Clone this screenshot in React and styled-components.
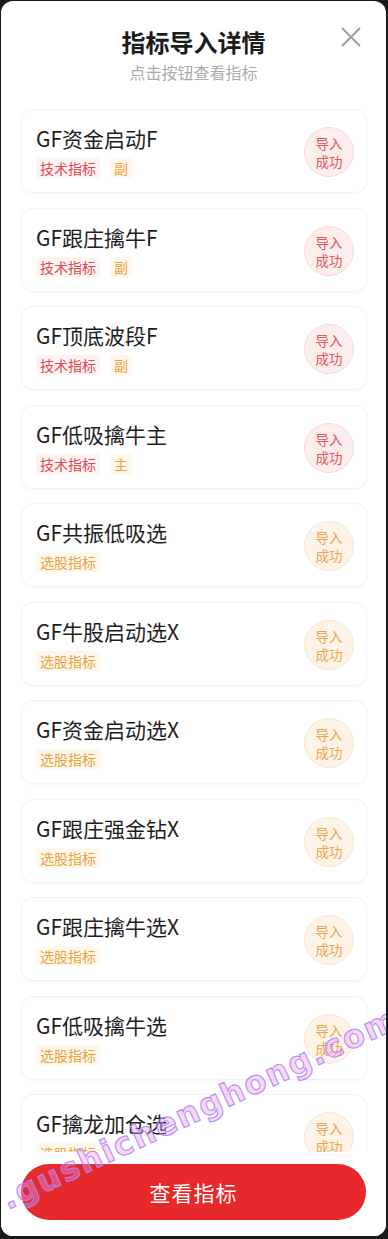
import React from 'react'
import styled, { createGlobalStyle } from 'styled-components'

const GlobalStyle = createGlobalStyle`
  html, body {
    margin: 0;
    padding: 0;
    background: #1a1a1a;
  }
  body {
    font-family: "Noto Sans CJK SC", "Noto Sans", sans-serif;
  }
`

const Sheet = styled.div`
  position: relative;
  box-sizing: border-box;
  margin: 1px 2px 3px 1px;
  height: calc(100vh - 4px);
  background: #fff;
  border-radius: 12px;
  display: flex;
  flex-direction: column;
  overflow: hidden;
`

const Header = styled.div`
  position: relative;
  padding-top: 25px;
  padding-bottom: 26px;
  text-align: center;
`

const Title = styled.h1`
  margin: 0;
  font-size: 24px;
  line-height: 32px;
  font-weight: 700;
  color: #1c1c1c;
`

const Sub = styled.div`
  margin-top: 3px;
  font-size: 16px;
  line-height: 22px;
  color: #ababab;
`

const Close = styled.button`
  position: absolute;
  top: 24px;
  right: 23px;
  width: 24px;
  height: 24px;
  padding: 0;
  border: none;
  background: none;
`

const List = styled.div`
  flex: 1;
  overflow: hidden;
  padding: 0 19px 0 20px;
  display: flex;
  flex-direction: column;
  gap: 14.5px;
`

const Card = styled.div`
  flex-shrink: 0;
  box-sizing: border-box;
  height: 84px;
  border: 1px solid #f1f1f1;
  border-radius: 12px;
  box-shadow: 0 1px 3px rgba(0, 0, 0, 0.03);
  display: flex;
  align-items: center;
  justify-content: space-between;
  padding: 0 12px 0 14px;
`

const Info = styled.div`
  display: flex;
  flex-direction: column;
  gap: 6px;
`

const Name = styled.div`
  font-size: 21px;
  line-height: 28px;
  color: #1e1e1e;
`

const Tags = styled.div`
  display: flex;
  gap: 10px;
`

const Tag = styled.span`
  font-size: 14px;
  line-height: 20px;
  padding: 0 4px;
  border-radius: 3px;
  color: ${p => (p.$tone === 'red' ? '#e1474c' : '#eea23e')};
  background: ${p => (p.$tone === 'red' ? '#fdf3f3' : '#fff7eb')};
`

const Badge = styled.div`
  width: 50px;
  height: 50px;
  border-radius: 50%;
  box-sizing: border-box;
  display: flex;
  align-items: center;
  justify-content: center;
  text-align: center;
  font-size: 13.5px;
  line-height: 18px;
  margin-top: 2px;
  color: ${p => (p.$tone === 'red' ? '#e0575b' : '#eea54e')};
  background: ${p => (p.$tone === 'red' ? '#fdeded' : '#fdf3e7')};
  border: 1px solid ${p => (p.$tone === 'red' ? '#f7dada' : '#f8e6cf')};
`

const Footer = styled.div`
  padding: 12px 20px 16px 20px;
  background: #fff;
`

const MainButton = styled.button`
  width: 100%;
  height: 56px;
  border: none;
  border-radius: 28px;
  background: #e8292c;
  color: #fff;
  font-family: inherit;
  font-size: 21px;
  letter-spacing: 1px;
`

const Watermark = styled.div`
  position: absolute;
  left: 2px;
  top: 1180px;
  transform: rotate(-25deg);
  transform-origin: left center;
  font-family: "DejaVu Sans", sans-serif;
  font-size: 32px;
  letter-spacing: 2px;
  font-weight: 700;
  color: rgba(240, 150, 230, 0.4);
  -webkit-text-stroke: 1.2px rgba(170, 130, 255, 0.85);
  white-space: nowrap;
  pointer-events: none;
`

const items = [
  { name: 'GF资金启动F', type: '技术指标', sub: '副' },
  { name: 'GF跟庄擒牛F', type: '技术指标', sub: '副' },
  { name: 'GF顶底波段F', type: '技术指标', sub: '副' },
  { name: 'GF低吸擒牛主', type: '技术指标', sub: '主' },
  { name: 'GF共振低吸选', type: '选股指标' },
  { name: 'GF牛股启动选X', type: '选股指标' },
  { name: 'GF资金启动选X', type: '选股指标' },
  { name: 'GF跟庄强金钻X', type: '选股指标' },
  { name: 'GF跟庄擒牛选X', type: '选股指标' },
  { name: 'GF低吸擒牛选', type: '选股指标' },
  { name: 'GF擒龙加仓选', type: '选股指标' },
]

const App = () => {
  return (
    <>
      <GlobalStyle />
      <Sheet>
        <Header>
          <Title>指标导入详情</Title>
          <Sub>点击按钮查看指标</Sub>
          <Close aria-label="close">
            <svg width="24" height="24" viewBox="0 0 24 24">
              <path d="M3 3 L21 21 M21 3 L3 21" stroke="#9a9a9a" strokeWidth="1.8" fill="none" />
            </svg>
          </Close>
        </Header>
        <List>
          {items.map(it => {
            const tone = it.type === '技术指标' ? 'red' : 'orange'
            return (
              <Card key={it.name}>
                <Info>
                  <Name>{it.name}</Name>
                  <Tags>
                    <Tag $tone={tone}>{it.type}</Tag>
                    {it.sub && <Tag $tone="orange">{it.sub}</Tag>}
                  </Tags>
                </Info>
                <Badge $tone={tone}>
                  导入<br />成功
                </Badge>
              </Card>
            )
          })}
        </List>
        <Footer>
          <MainButton>查看指标</MainButton>
        </Footer>
        <Watermark>.gushichenghong.com</Watermark>
      </Sheet>
    </>
  )
}

export default App
